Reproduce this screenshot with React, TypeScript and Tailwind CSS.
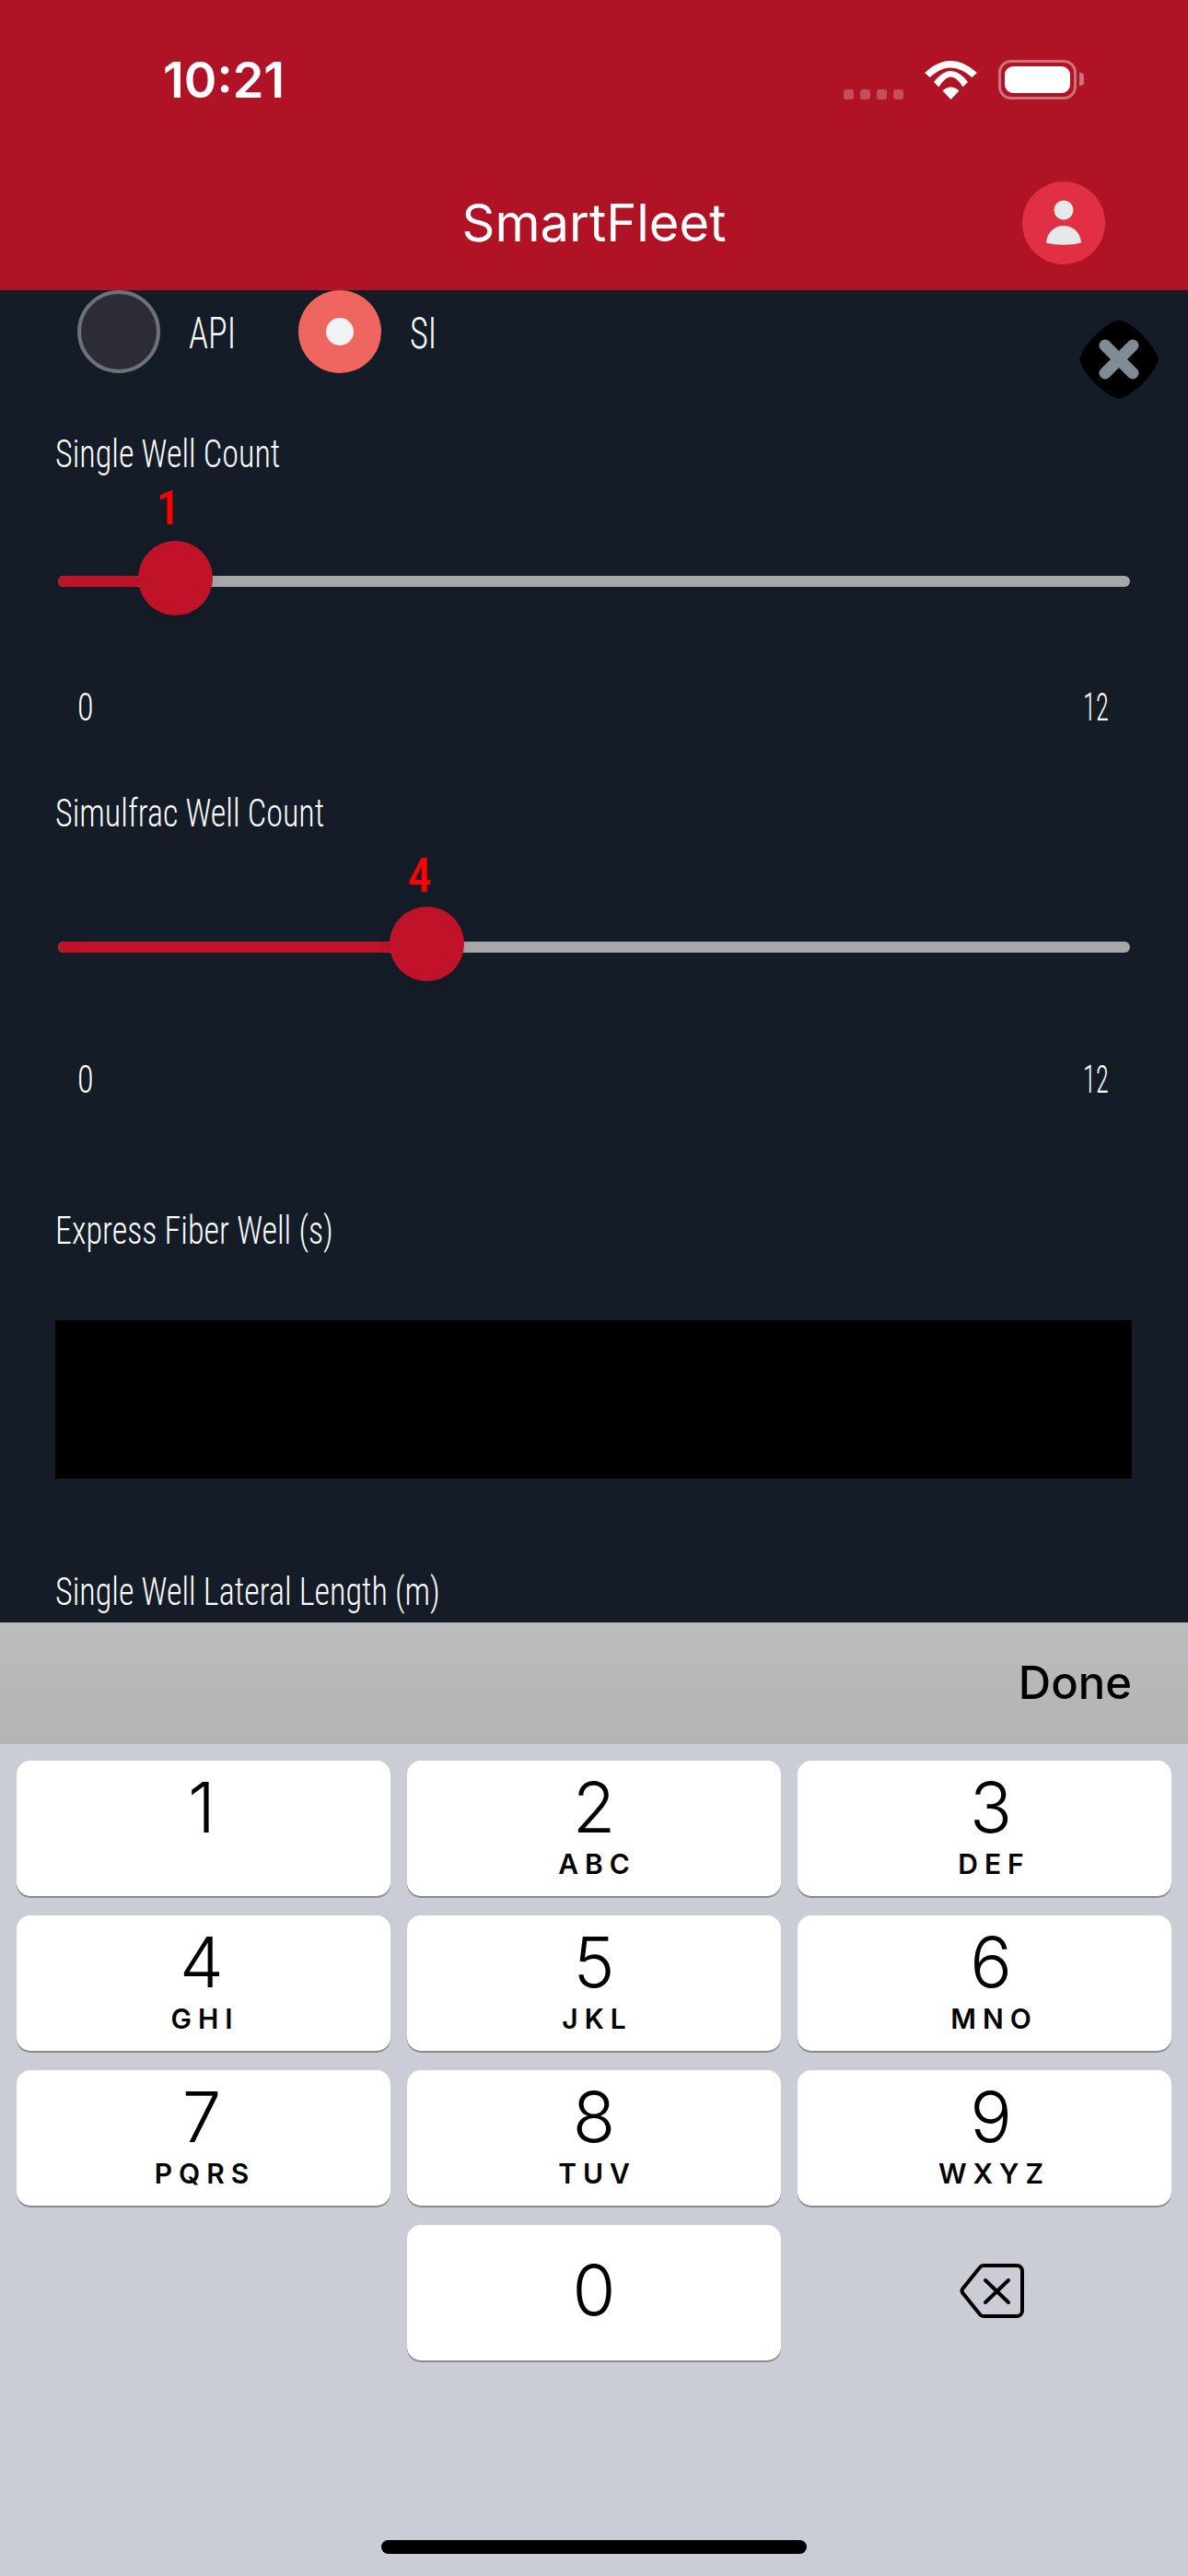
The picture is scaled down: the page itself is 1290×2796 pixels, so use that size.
import { ReactNode } from "react";

const cond = "font-['Roboto',sans-serif] font-[350] [font-stretch:75%] text-white";
const ios = "font-['Inter',sans-serif]";

const KEYS = [
  { d: "1", l: "" },
  { d: "2", l: "ABC" },
  { d: "3", l: "DEF" },
  { d: "4", l: "GHI" },
  { d: "5", l: "JKL" },
  { d: "6", l: "MNO" },
  { d: "7", l: "PQRS" },
  { d: "8", l: "TUV" },
  { d: "9", l: "WXYZ" },
];

// digits don't sit dead center on the outer columns
const COL_PAD = ["pr-[4px]", "", "pl-[14px]"];

// Roboto at its narrowest is still wider than the app's font, so squeeze a bit more
function Label({ children, className = "", fit = "origin-left scale-x-[0.86]" }: { children: ReactNode; className?: string; fit?: string }) {
  return <div className={`${cond} ${fit} ${className} h-[42px] whitespace-nowrap text-[42px] leading-[42px]`}>{children}</div>;
}

function StatusBar() {
  return (
    <div className="flex h-[120px] items-start justify-between pl-[177px] pr-[121px] pt-[60px]">
      <span className={`${ios} text-[54px] font-semibold leading-[54px] text-white`}>10:21</span>
      <div className="flex items-end pt-[5px]">
        <div className="flex gap-[7px]">
          {[0, 1, 2, 3].map((i) => (
            <div key={i} className="h-[11px] w-[11px] rounded-[3px] bg-white/25" />
          ))}
        </div>
        <svg className="ml-[23px]" width="57" height="42" viewBox="0 0 57 42" fill="#fff">
          <path d="M0 13Q28.5 -13 57 13L51.4 18Q28.5 -3 5.6 18Z" />
          <path d="M10 23Q28.5 -1 47 23L41.5 28.5Q28.5 6.5 15.5 28.5Z" />
          <path d="M19.5 32.5Q28.5 24.5 37.5 32.5L28.5 42Z" />
        </svg>
        <div className="relative ml-[23px] flex h-[43px] w-[85px] items-center justify-center rounded-[14px] border-[3px] border-white/40">
          <div className="h-[29px] w-[71px] rounded-[9px] bg-white" />
          <div className="absolute left-[85px] top-[11px] h-[14px] w-[5px] rounded-r-[4px] bg-white/40" />
        </div>
      </div>
    </div>
  );
}

function Header() {
  return (
    <header className="h-[315px] bg-[#b01325]">
      <StatusBar />
      <div className="relative mt-[77px] flex h-[90px] items-center justify-center">
        <span className={`${ios} text-[56px] leading-[90px] text-white`}>SmartFleet</span>
        <div className="absolute right-[90px] top-0 flex h-[90px] w-[90px] items-center justify-center rounded-full bg-[#e13044]">
          <svg width="38" height="50" viewBox="0 0 38 50" fill="#e6e9ea">
            <circle cx="19" cy="11" r="10.5" />
            <path d="M0 46.5C1 35 9 28 19 28S37 35 38 46.5C26 49.5 12 49.5 0 46.5Z" />
          </svg>
        </div>
      </div>
    </header>
  );
}

function Slider({ value, valueGap, knobGap, scaleGap }: { value: number; valueGap: string; knobGap: string; scaleGap: string }) {
  return (
    <>
      <div className={`${valueGap} h-[50px]`}>
        <div
          className="w-[60px] text-center font-['Roboto',sans-serif] text-[52px] font-medium leading-[50px] text-[#ff0000] [font-stretch:75%]"
          style={{ marginLeft: 2 + value * 91 }}
        >
          {value}
        </div>
      </div>
      <div className={`${knobGap} relative ml-[3px] h-[81px] w-[1164px]`}>
        <div className="absolute left-0 right-0 top-[38px] h-[12px] rounded-full bg-[#a8a8a8]" />
        <div className="absolute left-0 top-[38px] h-[12px] rounded-full bg-[#c01229]" style={{ width: value * 91 }} />
        <div
          className="absolute top-0 h-[81px] w-[81px] rounded-full bg-[#c01229] shadow-[0_6px_14px_rgba(0,0,0,0.08)]"
          style={{ left: value * 91 - 4 }}
        />
      </div>
      <div className={`${scaleGap} flex justify-between pl-[24px] pr-[86px]`}>
        <Label>0</Label>
        <Label fit="origin-right scale-x-[0.68]">12</Label>
      </div>
    </>
  );
}

function Radio({ on, label, width }: { on: boolean; label: string; width: string }) {
  return (
    <div className="flex items-center gap-[31px]">
      {on ? (
        <div className="flex h-[90px] w-[90px] items-center justify-center rounded-full bg-[#ef6560]">
          <div className="h-[30px] w-[30px] rounded-full bg-[#f0f2f5]" />
        </div>
      ) : (
        <div className="h-[90px] w-[90px] rounded-full border-[4px] border-[#6e7178] bg-[#2c2c35]" />
      )}
      <span className={`${cond} ${width} mt-[4px] origin-left scale-x-[0.8] text-[48px] leading-[48px]`}>{label}</span>
    </div>
  );
}

function Form() {
  return (
    <main className="relative h-[1446px] overflow-hidden bg-[#141c27] pl-[60px]">
      <div className="flex gap-[69px] pl-[24px]">
        <Radio on={false} label="API" width="w-[50px]" />
        <Radio on label="SI" width="w-[30px]" />
      </div>
      <svg className="absolute left-[1172px] top-[32px]" width="86" height="86" viewBox="0 0 86 86">
        <path d="M43 0C58 4 80 24 86 43C80 62 58 82 43 86C28 82 6 62 0 43C6 24 28 4 43 0Z" fill="#000" />
        <path d="M28 28L58 58M58 28L28 58" stroke="#7f8c94" strokeWidth="13" strokeLinecap="round" />
      </svg>
      <Label className="mt-[67px]">Single Well Count</Label>
      <Slider value={1} valueGap="mt-[13px]" knobGap="mt-[10px]" scaleGap="mt-[79px]" />
      <Label className="mt-[73px]">Simulfrac Well Count</Label>
      <Slider value={4} valueGap="mt-[22px]" knobGap="mt-[8px]" scaleGap="mt-[86px]" />
      <Label className="mt-[122px]">Express Fiber Well (s)</Label>
      <div className="mt-[76px] h-[172px] w-[1169px] bg-black" />
      <Label className="mt-[102px]">Single Well Lateral Length (m)</Label>
    </main>
  );
}

function Key({ d, l, pad }: { d: string; l: string; pad: string }) {
  return (
    <div className={`${ios} ${pad} flex h-[147px] flex-col items-center rounded-[15px] bg-white pt-[15px] text-black shadow-[0_2px_0_#898a8d]`}>
      <span className="text-[76px] font-[350] leading-[70px]">{d}</span>
      <span className="mt-[10px] pl-[7px] text-[30px] font-semibold leading-[34px] tracking-[7px]">{l}</span>
    </div>
  );
}

function Keyboard() {
  return (
    <section className="flex-1 bg-[#cacdd6]">
      <div className="flex h-[132px] items-center justify-end bg-gradient-to-b from-[#babcbe] to-[#b3b5b3] pr-[61px]">
        <span className={`${ios} text-[49px] font-[550] leading-[50px] text-black`}>Done</span>
      </div>
      <div className="grid grid-cols-3 gap-x-[18px] gap-y-[21px] px-[18px] pt-[18px]">
        {KEYS.map((k, i) => (
          <Key key={k.d} d={k.d} l={k.l} pad={COL_PAD[i % 3]} />
        ))}
        <div />
        <div className={`${ios} flex h-[147px] flex-col items-center rounded-[15px] bg-white pt-[35px] text-black shadow-[0_2px_0_#898a8d]`}>
          <span className="text-[76px] font-[350] leading-[70px]">0</span>
        </div>
        <div className="flex h-[147px] items-center justify-center pb-[5px] pl-[16px]">
          <svg width="70" height="59" viewBox="0 0 70 59" fill="none" stroke="#000" strokeWidth="4" strokeLinejoin="round" strokeLinecap="round">
            <path d="M26 2H62a6 6 0 0 1 6 6V51a6 6 0 0 1 -6 6H26a5 5 0 0 1 -4 -2L3.5 32a4 4 0 0 1 0 -5L22 4a5 5 0 0 1 4 -2Z" />
            <path d="M28 18L53 42M53 18L28 42" />
          </svg>
        </div>
      </div>
      <div className="mx-auto mt-[195px] h-[15px] w-[462px] rounded-full bg-black" />
    </section>
  );
}

export default function App() {
  return (
    <div className="flex h-[2796px] w-[1290px] flex-col overflow-hidden">
      <Header />
      <Form />
      <Keyboard />
    </div>
  );
}
